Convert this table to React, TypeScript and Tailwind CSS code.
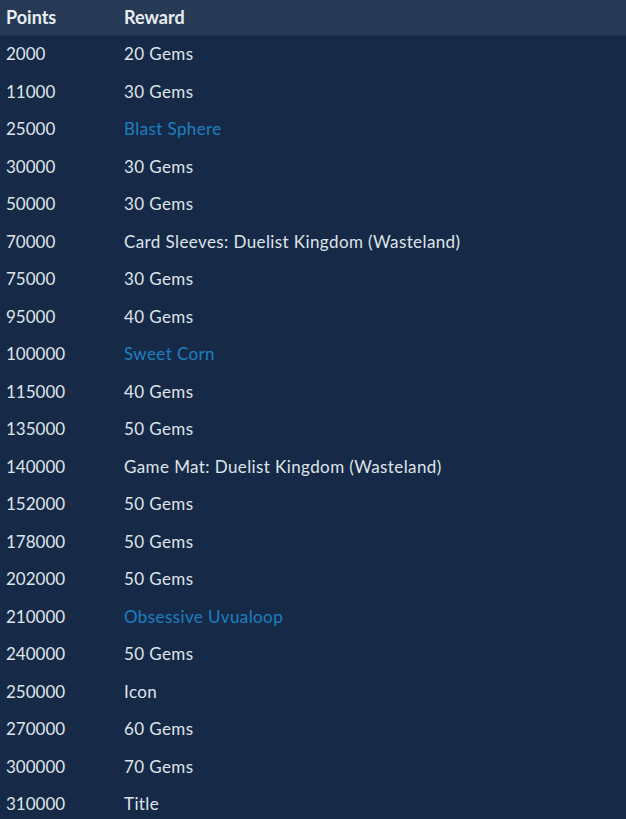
const rewards: { points: string; reward: string; link?: boolean }[] = [
  { points: '2000', reward: '20 Gems' },
  { points: '11000', reward: '30 Gems' },
  { points: '25000', reward: 'Blast Sphere', link: true },
  { points: '30000', reward: '30 Gems' },
  { points: '50000', reward: '30 Gems' },
  { points: '70000', reward: 'Card Sleeves: Duelist Kingdom (Wasteland)' },
  { points: '75000', reward: '30 Gems' },
  { points: '95000', reward: '40 Gems' },
  { points: '100000', reward: 'Sweet Corn', link: true },
  { points: '115000', reward: '40 Gems' },
  { points: '135000', reward: '50 Gems' },
  { points: '140000', reward: 'Game Mat: Duelist Kingdom (Wasteland)' },
  { points: '152000', reward: '50 Gems' },
  { points: '178000', reward: '50 Gems' },
  { points: '202000', reward: '50 Gems' },
  { points: '210000', reward: 'Obsessive Uvualoop', link: true },
  { points: '240000', reward: '50 Gems' },
  { points: '250000', reward: 'Icon' },
  { points: '270000', reward: '60 Gems' },
  { points: '300000', reward: '70 Gems' },
  { points: '310000', reward: 'Title' },
];

export default function App() {
  return (
    <div className="min-h-screen bg-[#162a47] font-['Lato',sans-serif] text-[17px] text-[#dfe4ea]">
      <table className="w-full border-collapse">
        <thead>
          <tr className="bg-[#263a56] border-b border-[#1e3250]">
            <th className="h-[35px] w-[124px] pl-[6px] text-left font-bold text-[18px] text-[#e9edf2]">Points</th>
            <th className="h-[35px] text-left font-bold text-[18px] text-[#e9edf2]">Reward</th>
          </tr>
        </thead>
        <tbody>
          {rewards.map((r) => (
            <tr key={r.points} className="h-[37.5px]">
              <td className="pl-[6px]">{r.points}</td>
              <td className={r.link ? 'tracking-[0.4px] text-[#1b80c2]' : 'tracking-[0.4px]'}>{r.reward}</td>
            </tr>
          ))}
        </tbody>
      </table>
    </div>
  );
}
